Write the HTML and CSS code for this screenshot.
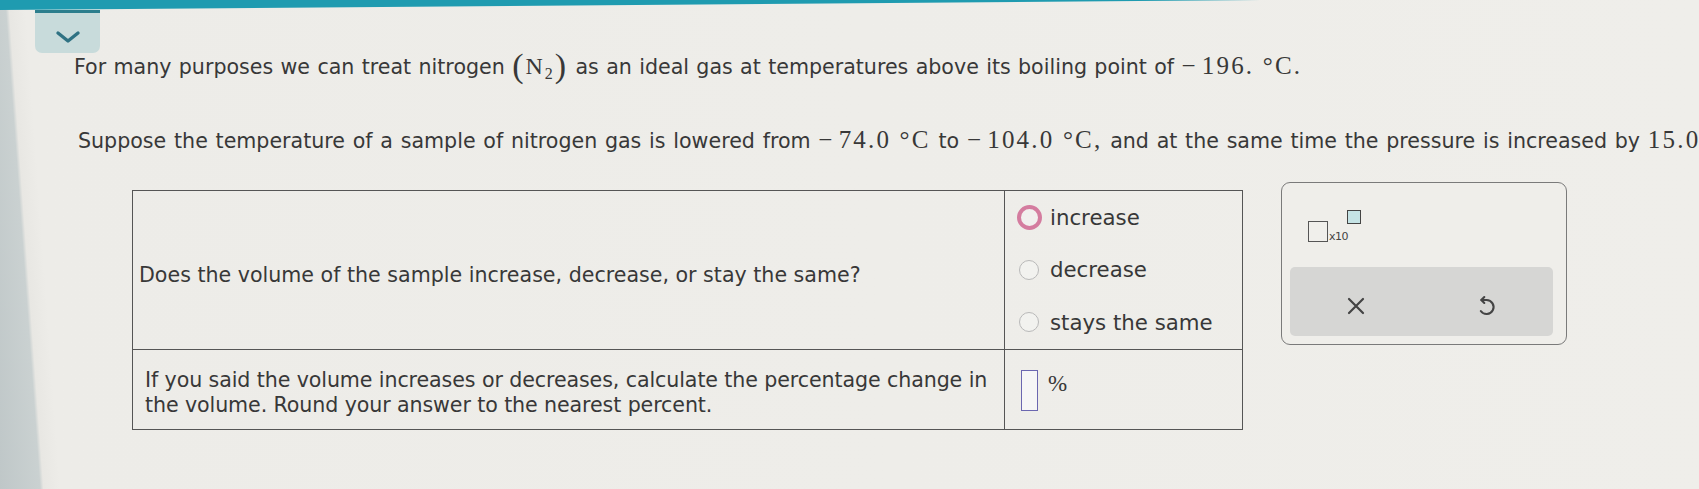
FILE: index.html
```html
<!DOCTYPE html>
<html lang="en">
<head>
<meta charset="utf-8">
<title>Ideal gas question</title>
<link rel="stylesheet" href="styles.css">
</head>
<body>
<div class="page">
  <div class="topbar"></div>
  <div class="tab">
    <svg class="chev" width="26" height="14" viewBox="0 0 26 14"><polyline points="3,3 13,11 23,3" fill="none" stroke="#2f7283" stroke-width="3.4" stroke-linecap="round" stroke-linejoin="round"/></svg>
  </div>
  <p class="line l1">For many purposes we can treat nitrogen <span class="math grp"><span class="paren">(</span><span class="nn">N</span><sub>2</sub><span class="paren">)</span></span> as an ideal gas at temperatures above its boiling point of <span class="math"><span class="minus">−</span>196. °C.</span></p>
  <p class="line l2">Suppose the temperature of a sample of nitrogen gas is lowered from <span class="math"><span class="minus">−</span>74.0 °C</span> to <span class="math"><span class="minus">−</span>104.0 °C,</span> and at the same time the pressure is increased by <span class="math">15.0</span></p>
  <div class="work">
    <table class="qt">
      <colgroup><col class="c1"><col class="c2"></colgroup>
      <tr class="r1">
        <td class="q">Does the volume of the sample increase, decrease, or stay the same?</td>
        <td class="a">
          <div class="opt"><span class="rad"><span class="ring sel"></span></span><span class="lbl">increase</span></div>
          <div class="opt"><span class="rad"><span class="ring"></span></span><span class="lbl">decrease</span></div>
          <div class="opt"><span class="rad"><span class="ring"></span></span><span class="lbl">stays the same</span></div>
        </td>
      </tr>
      <tr class="r2">
        <td class="q">If you said the volume increases or decreases, calculate the percentage change in<br>the volume. Round your answer to the nearest percent.</td>
        <td class="a pct"><span class="box"></span><span class="math pc">%</span></td>
      </tr>
    </table>
    <div class="panel">
      <div class="sci">
        <span class="mant"></span><span class="x10">x10</span><span class="exp"></span>
      </div>
      <div class="bar">
        <span class="btn bx">
          <svg width="22" height="22" viewBox="0 0 22 22"><path d="M4 4 L18 18 M18 4 L4 18" stroke="#444" stroke-width="2.2" stroke-linecap="round"/></svg>
        </span>
        <span class="btn bu">
          <svg width="24" height="26" viewBox="0 0 24 26"><path d="M7.5 7 H12.5 A7 7 0 1 1 6.8 18" fill="none" stroke="#444" stroke-width="2.1" stroke-linecap="round" stroke-linejoin="round"/><path d="M10.3 4 L7.3 7 L10.3 10" fill="none" stroke="#444" stroke-width="2.1" stroke-linecap="round" stroke-linejoin="round"/></svg>
        </span>
      </div>
    </div>
  </div>
</div>
</body>
</html>
```

FILE: styles.css
```css
html, body {
  margin: 0;
  padding: 0;
}
body {
  background: #eeede9;
  font-family: "DejaVu Sans", Verdana, sans-serif;
  color: #383838;
}
.page {
  min-height: 100vh;
  overflow: hidden;
  background: linear-gradient(85.9deg, #bfc7c8 0px, #cad1d1 40px, #e8e7e3 43.5px, #edece8 60px, #efeeea 100%);
}
.topbar {
  height: 10px;
  background: #1f9bb0;
  clip-path: polygon(0 0, 1260px 0, 0 100%);
}
.tab {
  margin-left: 35px;
  width: 65px;
  height: 40px;
  background: #c8dbdb;
  border-top: 3px solid #2c7e8d;
  border-radius: 0 0 7px 7px;
  display: flex;
  align-items: center;
  justify-content: center;
}
.chev {
  display: block;
  margin-top: 7px;
}
.line {
  margin: 0;
  padding-left: 74px;
  font-size: 20.6px;
  line-height: 28px;
  white-space: nowrap;
  word-spacing: 0.8px;
}
.l2 {
  margin-top: 46px;
  padding-left: 78px;
  word-spacing: 1.2px;
}
.math {
  font-family: "Liberation Serif", "Times New Roman", serif;
  font-size: 25px;
  letter-spacing: 2.2px;
  line-height: 0;
  word-spacing: 0;
}
.minus {
  margin-right: 4px;
}
.grp {
  letter-spacing: 2px;
}
.nn {
  font-size: 24px;
}
.math sub {
  font-size: 16px;
  vertical-align: -5px;
  line-height: 0;
}
.paren {
  font-size: 34px;
  line-height: 0;
  vertical-align: -3px;
}
.work {
  display: flex;
  align-items: flex-start;
  margin-top: 27px;
  padding-left: 132px;
}
.qt {
  margin-top: 8px;
  border-collapse: collapse;
  table-layout: fixed;
  width: 1111px;
  font-size: 20.6px;
}
.c1 {
  width: 872px;
}
.qt td {
  border: 1.5px solid #555;
  padding: 0;
  vertical-align: middle;
}
.qt td.q {
  padding: 12px 6px 0 6px;
  line-height: 25px;
  white-space: nowrap;
}
.r1 td {
  height: 158px;
  box-sizing: border-box;
}
.r2 td {
  height: 80px;
  box-sizing: border-box;
}
.r2 td.q {
  padding: 8px 0 0 12px;
  letter-spacing: -0.1px;
}
.a {
  padding-left: 11px !important;
  font-size: 21.3px;
}
.opt {
  height: 52.5px;
  display: flex;
  align-items: center;
}
.rad {
  width: 26px;
  height: 26px;
  display: flex;
  align-items: center;
  justify-content: center;
  margin-right: 8px;
}
.ring {
  width: 18px;
  height: 18px;
  border-radius: 50%;
  border: 1.5px solid #b9b9b9;
  background: #f2f2ef;
}
.ring.sel {
  width: 17px;
  height: 17px;
  border: 4.5px solid #d47c9f;
  background: #f1efee;
}
.pct {
  padding-left: 16px !important;
  padding-top: 6px !important;
}
.pct .box {
  display: inline-block;
  width: 15px;
  height: 39px;
  border: 1.6px solid #6b67b0;
  background: #f6f6f6;
  vertical-align: middle;
  margin-top: -4px;
}
.pc {
  display: inline-block;
  vertical-align: middle;
  margin-left: 10px;
  margin-top: -16px;
  font-size: 23px;
  letter-spacing: 0;
  line-height: 26px;
}
.panel {
  margin-left: 38px;
  width: 284px;
  height: 161px;
  border: 1.5px solid #7a7a7a;
  border-radius: 9px;
  background: #efeeea;
  display: flex;
  flex-direction: column;
}
.sci {
  height: 84px;
  padding-left: 26px;
  padding-top: 38px;
  box-sizing: border-box;
  display: flex;
  align-items: flex-start;
}
.mant {
  width: 18px;
  height: 19px;
  border: 1.5px solid #555;
  background: #f0efeb;
}
.x10 {
  font-size: 11px;
  margin-top: 9px;
  margin-left: 1px;
  color: #444;
  letter-spacing: -0.5px;
}
.exp {
  width: 12px;
  height: 12px;
  border: 1.5px solid #444;
  background: #c5e3e5;
  margin-top: -11px;
  margin-left: -1px;
}
.bar {
  margin: 0 13px 8px 8px;
  height: 70px;
  background: #d6d6d4;
  border-radius: 5px;
  display: flex;
  align-items: center;
  padding-top: 10px;
  box-sizing: border-box;
}
.btn {
  display: flex;
  align-items: center;
}
.bx {
  margin-left: 55px;
}
.bu {
  margin-left: 107px;
}
.btn svg {
  display: block;
}
```
